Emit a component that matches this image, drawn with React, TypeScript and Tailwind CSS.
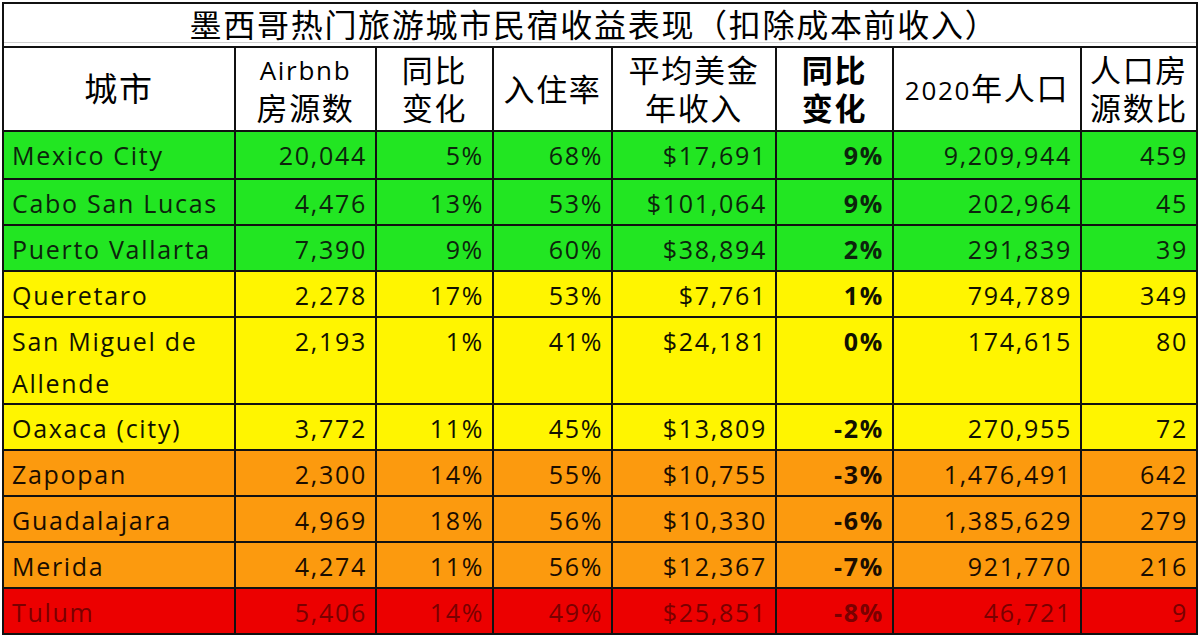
import React from "react";

type Row = {
  city: string;
  listings: string;
  yoy: string;
  occ: string;
  rev: string;
  yoy2: string;
  pop: string;
  ratio: string;
  tone: "g" | "y" | "o" | "r";
  tall?: boolean;
};

const rows: Row[] = [
  { city: "Mexico City", listings: "20,044", yoy: "5%", occ: "68%", rev: "$17,691", yoy2: "9%", pop: "9,209,944", ratio: "459", tone: "g" },
  { city: "Cabo San Lucas", listings: "4,476", yoy: "13%", occ: "53%", rev: "$101,064", yoy2: "9%", pop: "202,964", ratio: "45", tone: "g" },
  { city: "Puerto Vallarta", listings: "7,390", yoy: "9%", occ: "60%", rev: "$38,894", yoy2: "2%", pop: "291,839", ratio: "39", tone: "g" },
  { city: "Queretaro", listings: "2,278", yoy: "17%", occ: "53%", rev: "$7,761", yoy2: "1%", pop: "794,789", ratio: "349", tone: "y" },
  { city: "San Miguel de Allende", listings: "2,193", yoy: "1%", occ: "41%", rev: "$24,181", yoy2: "0%", pop: "174,615", ratio: "80", tone: "y", tall: true },
  { city: "Oaxaca (city)", listings: "3,772", yoy: "11%", occ: "45%", rev: "$13,809", yoy2: "-2%", pop: "270,955", ratio: "72", tone: "y" },
  { city: "Zapopan", listings: "2,300", yoy: "14%", occ: "55%", rev: "$10,755", yoy2: "-3%", pop: "1,476,491", ratio: "642", tone: "o" },
  { city: "Guadalajara", listings: "4,969", yoy: "18%", occ: "56%", rev: "$10,330", yoy2: "-6%", pop: "1,385,629", ratio: "279", tone: "o" },
  { city: "Merida", listings: "4,274", yoy: "11%", occ: "56%", rev: "$12,367", yoy2: "-7%", pop: "921,770", ratio: "216", tone: "o" },
  { city: "Tulum", listings: "5,406", yoy: "14%", occ: "49%", rev: "$25,851", yoy2: "-8%", pop: "46,721", ratio: "9", tone: "r" },
];

const toneBg: Record<Row["tone"], string> = {
  g: "bg-[#22e622] text-[#0c240c]",
  y: "bg-[#fff500] text-[#111100]",
  o: "bg-[#fc9a0e] text-[#1a0d00]",
  r: "bg-[#ec0000] text-[#7a0000]",
};

const cell = "box-border border-r-2 border-b-2 border-[#111]";
const widths = ["w-[232px]", "w-[141px]", "w-[117px]", "w-[119px]", "w-[164px]", "w-[117px]", "w-[188px]", "w-[116px]"];

function Header() {
  const h = `${cell} flex flex-col items-center justify-center text-center leading-[38px] text-[31px] text-black font-normal`;
  const lat = "text-[26px] font-medium";
  return (
    <div className="flex h-[84px] bg-white">
      <div className={`${h} ${widths[0]} text-[33px]`}>城市</div>
      <div className={`${h} ${widths[1]}`}>
        <span className={lat}>Airbnb</span>
        <span>房源数</span>
      </div>
      <div className={`${h} ${widths[2]}`}>
        <span>同比</span>
        <span>变化</span>
      </div>
      <div className={`${h} ${widths[3]}`}>入住率</div>
      <div className={`${h} ${widths[4]}`}>
        <span>平均美金</span>
        <span>年收入</span>
      </div>
      <div className={`${cell} ${widths[5]} flex flex-col items-center justify-center text-center leading-[38px] text-[31px] text-black font-bold`}>
        <span>同比</span>
        <span>变化</span>
      </div>
      <div className={`${h} ${widths[6]}`}>
        <span>
          <span className={lat}>2020</span>年人口
        </span>
      </div>
      <div className={`${h} ${widths[7]}`}>
        <span>人口房</span>
        <span>源数比</span>
      </div>
    </div>
  );
}

function DataRow({ r, first }: { r: Row; first: boolean }) {
  const height = r.tall ? "h-[87px]" : first ? "h-[48px]" : "h-[46px]";
  const num = `${cell} text-right pr-[8px] pt-[2px] leading-[42px]`;
  const vals = [r.listings, r.yoy, r.occ, r.rev, r.yoy2, r.pop, r.ratio];
  return (
    <div className={`flex ${height} ${toneBg[r.tone]} font-medium`}>
      <div className={`${cell} ${widths[0]} pl-[8px] pr-[6px] pt-[2px] leading-[42px]`}>{r.city}</div>
      {vals.map((v, i) => (
        <div key={i} className={`${num} ${widths[i + 1]} ${i === 4 ? "font-bold" : ""}`}>
          {v}
        </div>
      ))}
    </div>
  );
}

export default function App() {
  return (
    <div
      className="w-[1200px] h-[637px] overflow-hidden bg-white pl-[2px] pt-[2px] text-[25px] tracking-[1.7px]"
      style={{ fontFamily: '"Open Sans", "Noto Sans CJK SC", sans-serif' }}
    >
      <div className="box-border w-[1196px] border-l-2 border-t-2 border-[#111]">
        <div className={`${cell} relative flex h-[44px] w-[1194px] items-center justify-center bg-white text-[32px] text-black`}>
          <span className="pr-[12px]">墨西哥热门旅游城市民宿收益表现（扣除成本前收入）</span>
          <div className="absolute bottom-[3px] left-0 right-0 h-px bg-[#cfcfcf]" />
        </div>
        <Header />
        {rows.map((r, i) => (
          <DataRow key={r.city} r={r} first={i === 0} />
        ))}
      </div>
    </div>
  );
}
